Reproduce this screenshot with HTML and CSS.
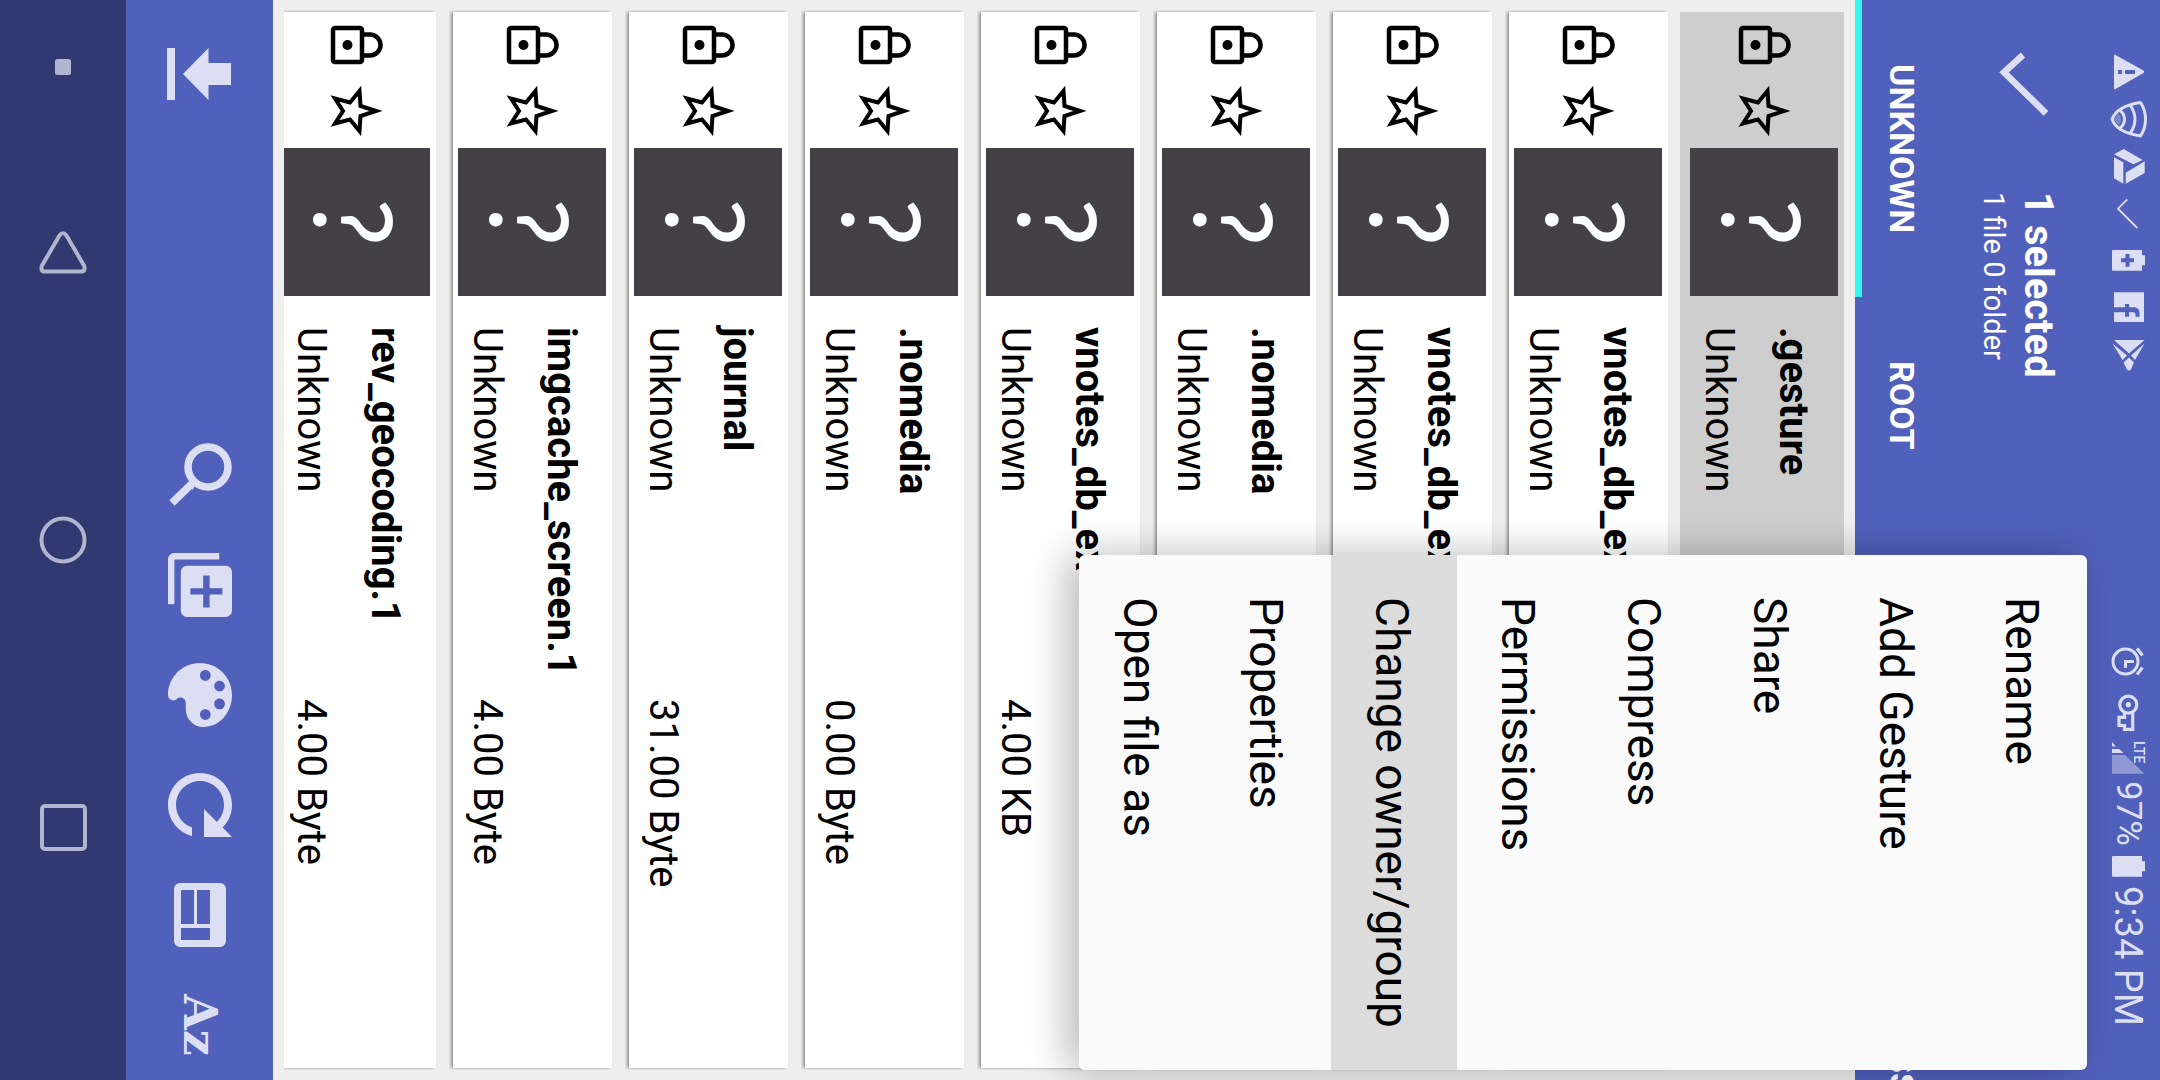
FILE: index.html
```html
<!DOCTYPE html>
<html lang="en">
<head>
<meta charset="utf-8">
<title>File manager</title>
<link rel="stylesheet" href="styles.css">
</head>
<body>
<svg class="defs" aria-hidden="true">
  <symbol id="lock" viewBox="0 0 66 66">
    <rect x="10" y="16" width="29" height="34" rx="2" fill="none" stroke="#000" stroke-width="4.500"/>
    <path d="M41 22.500h6a10.500 10.500 0 0 1 0 21h-6" fill="none" stroke="#000" stroke-width="4.500"/>
    <circle cx="24.500" cy="33" r="5"/>
  </symbol>
  <symbol id="star" viewBox="0 0 66 66">
    <path d="M53 33L37.500 28 36.500 13 27 24.500 12 20.500 20 33 12 45.500 27 41.500 36.500 53 37.500 38Z" fill="none" stroke="#000" stroke-width="4"/>
  </symbol>
</svg>

<header class="header">
  <div class="status">
    <div class="status-group">
      <svg class="status-icon" viewBox="0 0 48 47"><path fill-rule="evenodd" d="M10 7.500Q10 6 11.500 7L39.500 22.500Q41 23.700 39.500 25L11.500 41Q10 42 10 40.500ZM14 22v4h4v-4zM21 22v4h10v-4z"/></svg>
      <svg class="status-icon" viewBox="0 0 48 47"><g fill="none" stroke="currentColor" stroke-width="3"><path d="M8 24.300Q13 11 36.500 7.500Q41.500 15 41.500 24.300T36.500 41Q13 37.600 8 24.300Z" stroke-linejoin="round"/><path d="M26 10Q31 17 31 24.300T26 38.500M16 15.500Q20.500 19 20.500 24.300T16 33" /></g><path d="M9 24.300l6-6q4 6 0 12z" opacity=".3"/></svg>
      <svg class="status-icon" viewBox="0 0 48 47"><path d="M19.700 7L38.700 18 29.300 22.300 10 12.300ZM10 15.300L19.300 20.300V41.700L10 36.300ZM40.700 19.300V31L21.700 41.700V30.700Z"/></svg>
      <svg class="status-icon" viewBox="0 0 48 47"><path d="M23.300 10.300L14 19.700 33.300 39" fill="none" stroke="currentColor" stroke-width="1.800"/></svg>
      <svg class="status-icon" viewBox="0 0 48 47"><path fill-rule="evenodd" d="M9 14H38V19.300H41V29.300H38V34.700H9Q8 34.700 8 33.500V15Q8 14 9 14ZM21.500 18v4.300H17v4h4.500v4.400h4v-4.400H30v-4h-4.500V18z"/></svg>
      <svg class="status-icon" viewBox="0 0 48 47"><path d="M10 9.300H40V39H10Z"/><path class="cut" d="M10 24.300H21V21H25V24.300H29Q35.500 24.300 35.500 30V33.700H31.500V31Q31.500 29.300 29 29.300H25V33.700H21V29.300H10Z"/></svg>
      <svg class="status-icon" viewBox="0 0 48 47"><path d="M10 10H40.500L25 23.500ZM8.500 13.500L23 25.500 18.500 30ZM40.500 13.500L27 25.500 31 30ZM25 27.500L30 32.500 27 39.500Q25 41.500 23 39.500L19.500 32.500Z"/></svg>
    </div>
    <div class="status-group">
      <svg class="status-icon" viewBox="0 0 48 47"><g fill="none" stroke="currentColor" stroke-width="3"><circle cx="21.500" cy="21.500" r="12.500"/><path d="M21.500 28V21.500H30M33 8.500L38.500 15.500M38.500 27.500L33 34.500"/></g></svg>
      <svg class="status-icon" viewBox="0 0 48 47"><g fill="none" stroke="currentColor" stroke-width="3.200"><path d="M20.500 25.500V30.300H15V38.500H20.500V42.300H28.700V25.500"/><circle cx="24.300" cy="17.700" r="8.500"/></g><circle cx="24.300" cy="17.700" r="2.600"/></svg>
      <svg class="status-icon" viewBox="0 0 48 47"><path d="M8 8L12 12.500H8ZM8 15H15L19.500 19H8Z"/><path d="M8 21H21L40.300 39.700H8Z" opacity=".45"/><text class="lte" transform="translate(30 7) rotate(90)">LTE</text></svg>
      <span class="percent">97%</span>
      <svg class="status-icon status-battery" viewBox="0 4 48 40"><path d="M9 14H38V19.300H41V29.300H38V34.700H9Q8 34.700 8 33.500V15Q8 14 9 14Z"/></svg>
      <time class="clock">9:34 PM</time>
    </div>
  </div>
  <div class="selection">
    <button class="done" aria-label="Done"><svg width="72" height="72" viewBox="0 0 72 72"><path d="M41 7L22 24.300 64 65.300" fill="none" stroke="currentColor" stroke-width="6.500"/></svg></button>
    <div>
      <h1 class="title">1 selected</h1>
      <p class="subtitle">1 file 0 folder</p>
    </div>
  </div>
  <nav class="tabs">
    <a class="tab tab-active" href="#">UNKNOWN</a>
    <a class="tab" href="#">ROOT</a>
    <a class="tab tab-last" href="#">SS</a>
  </nav>
</header>

<main class="files">
  <ul class="list">
    <li class="file file-selected">
      <button class="mark" aria-label="Lock"><svg><use href="#lock"/></svg></button><button class="mark" aria-label="Favourite"><svg><use href="#star"/></svg></button>
      <span class="thumb">?</span>
      <div class="info"><b class="name">.gesture</b><span class="kind">Unknown</span></div>
    </li>
    <li class="file">
      <button class="mark" aria-label="Lock"><svg><use href="#lock"/></svg></button><button class="mark" aria-label="Favourite"><svg><use href="#star"/></svg></button>
      <span class="thumb">?</span>
      <div class="info"><b class="name">vnotes_db_ex</b><span class="kind">Unknown</span></div>
    </li>
    <li class="file">
      <button class="mark" aria-label="Lock"><svg><use href="#lock"/></svg></button><button class="mark" aria-label="Favourite"><svg><use href="#star"/></svg></button>
      <span class="thumb">?</span>
      <div class="info"><b class="name">vnotes_db_ex</b><span class="kind">Unknown</span></div>
    </li>
    <li class="file">
      <button class="mark" aria-label="Lock"><svg><use href="#lock"/></svg></button><button class="mark" aria-label="Favourite"><svg><use href="#star"/></svg></button>
      <span class="thumb">?</span>
      <div class="info"><b class="name">.nomedia</b><span class="kind">Unknown</span></div>
    </li>
    <li class="file">
      <button class="mark" aria-label="Lock"><svg><use href="#lock"/></svg></button><button class="mark" aria-label="Favourite"><svg><use href="#star"/></svg></button>
      <span class="thumb">?</span>
      <div class="info"><b class="name">vnotes_db_ex</b><span class="kind">Unknown</span><span class="size">4.00 KB</span></div>
    </li>
    <li class="file">
      <button class="mark" aria-label="Lock"><svg><use href="#lock"/></svg></button><button class="mark" aria-label="Favourite"><svg><use href="#star"/></svg></button>
      <span class="thumb">?</span>
      <div class="info"><b class="name">.nomedia</b><span class="kind">Unknown</span><span class="size">0.00 Byte</span></div>
    </li>
    <li class="file">
      <button class="mark" aria-label="Lock"><svg><use href="#lock"/></svg></button><button class="mark" aria-label="Favourite"><svg><use href="#star"/></svg></button>
      <span class="thumb">?</span>
      <div class="info"><b class="name">journal</b><span class="kind">Unknown</span><span class="size">31.00 Byte</span></div>
    </li>
    <li class="file">
      <button class="mark" aria-label="Lock"><svg><use href="#lock"/></svg></button><button class="mark" aria-label="Favourite"><svg><use href="#star"/></svg></button>
      <span class="thumb">?</span>
      <div class="info"><b class="name">imgcache_screen.1</b><span class="kind">Unknown</span><span class="size">4.00 Byte</span></div>
    </li>
    <li class="file">
      <button class="mark" aria-label="Lock"><svg><use href="#lock"/></svg></button><button class="mark" aria-label="Favourite"><svg><use href="#star"/></svg></button>
      <span class="thumb">?</span>
      <div class="info"><b class="name">rev_geocoding.1</b><span class="kind">Unknown</span><span class="size">4.00 Byte</span></div>
    </li>
  </ul>
</main>

<div class="toolbar">
  <button class="tool tool-first" aria-label="Download"><svg viewBox="0 0 96 96"><path d="M15 22h8v52h-8zM31 48L56.500 22V37H79V59H56.500V74Z"/></svg></button>
  <button class="tool" aria-label="Search"><svg viewBox="0 0 96 96"><g fill="none" stroke="currentColor"><circle cx="56" cy="40" r="20" stroke-width="7.500"/><path d="M20 76L39 57.500" stroke-width="7.500"/></g><path d="M35 56q4-4 6-2l3 1-3 8z"/></svg></button>
  <button class="tool" aria-label="Add"><svg viewBox="0 0 30 30"><path transform="translate(15 15) rotate(90) translate(-12 -12)" d="M4 6H2v14c0 1.100.9 2 2 2h14v-2H4V6zm16-4H8c-1.100 0-2 .9-2 2v12c0 1.100.9 2 2 2h12c1.100 0 2-.9 2-2V4c0-1.100-.9-2-2-2zm-1 9h-4v4h-2v-4H9V9h4V5h2v4h4v2z"/></svg></button>
  <button class="tool" aria-label="Theme"><svg viewBox="0 0 27 27"><path transform="translate(13.500 13.500) rotate(90) translate(-12 -12)" d="M12 3c-4.970 0-9 4.030-9 9s4.030 9 9 9c.83 0 1.500-.67 1.500-1.500 0-.39-.15-.74-.39-1.010-.23-.26-.38-.61-.38-.99 0-.83.67-1.500 1.500-1.500H16c2.760 0 5-2.240 5-5 0-4.420-4.030-8-9-8zm-5.500 9c-.83 0-1.500-.67-1.500-1.500S5.670 9 6.500 9 8 9.670 8 10.500 7.330 12 6.500 12zm3-4C8.670 8 8 7.330 8 6.500S8.670 5 9.500 5s1.500.67 1.500 1.500S10.330 8 9.500 8zm5 0c-.83 0-1.500-.67-1.500-1.500S13.670 5 14.500 5s1.500.67 1.500 1.500S15.330 8 14.500 8zm3 4c-.83 0-1.500-.67-1.500-1.500S16.670 9 17.500 9s1.500.67 1.500 1.500-.67 1.500-1.500 1.500z"/></svg></button>
  <button class="tool" aria-label="Refresh"><svg viewBox="0 0 24 24"><path transform="rotate(90 12 12)" d="M17.650 6.350C16.200 4.900 14.210 4 12 4c-4.420 0-7.990 3.580-7.990 8s3.570 8 7.990 8c3.730 0 6.840-2.550 7.730-6h-2.080c-.82 2.330-3.040 4-5.650 4-3.310 0-6-2.690-6-6s2.690-6 6-6c1.660 0 3.140.69 4.220 1.780L13 11h7V4l-2.350 2.350z"/></svg></button>
  <button class="tool" aria-label="View"><svg viewBox="0 0 96 96"><path fill-rule="evenodd" d="M28 16H68a6 6 0 0 1 6 6V74a6 6 0 0 1-6 6H28a6 6 0 0 1-6-6V22a6 6 0 0 1 6-6ZM29 23v34h13V23zM45 23v34h13V23zM29 61v12h29V61z"/></svg></button>
  <button class="tool sort">Az</button>
</div>

<nav class="system">
  <button class="sys sys-first" aria-label="Hide bar"><svg width="48" height="48" viewBox="0 0 48 48"><rect x="16" y="16" width="16" height="16" rx="2.500" fill="currentColor"/></svg></button>
  <button class="sys" aria-label="Back"><svg width="48" height="48" viewBox="0 0 48 48"><path d="M20.500 6.500L3 36.500Q1 42.500 6 42.500H42Q47 42.500 45 36.500L27.500 6.500Q24 2 20.500 6.500Z"/></svg></button>
  <button class="sys" aria-label="Home"><svg width="48" height="48" viewBox="0 0 48 48"><circle cx="24" cy="24" r="21.500"/></svg></button>
  <button class="sys" aria-label="Recent apps"><svg width="48" height="48" viewBox="0 0 48 48"><rect x="3" y="3" width="43" height="43" rx="3"/></svg></button>
</nav>

<div class="menu" role="menu">
  <button class="menu-item" role="menuitem">Rename</button>
  <button class="menu-item" role="menuitem">Add Gesture</button>
  <button class="menu-item" role="menuitem">Share</button>
  <button class="menu-item" role="menuitem">Compress</button>
  <button class="menu-item" role="menuitem">Permissions</button>
  <button class="menu-item menu-item-pressed" role="menuitem">Change owner/group</button>
  <button class="menu-item" role="menuitem">Properties</button>
  <button class="menu-item" role="menuitem">Open file as</button>
</div>
</body>
</html>
```

FILE: styles.css
```css
:root {
  --brand: #5160bb;
  --brand-dark: #313970;
  --on-brand: #dcdff3;
  --page: #efefef;
}

* { box-sizing: border-box; }

html { writing-mode: vertical-rl; text-orientation: sideways; }

body {
  position: relative;
  margin: 0;
  block-size: 100vw;
  inline-size: 100vh;
  display: flex;
  flex-direction: column;
  overflow: hidden;
  background: var(--page);
  font-family: Roboto, "Liberation Sans", sans-serif;
  color: #000;
}

button {
  writing-mode: inherit;
  margin: 0;
  padding: 0;
  border: 0;
  background: none;
  font: inherit;
  color: inherit;
}

svg { display: block; fill: currentColor; }
.defs { position: absolute; width: 0; height: 0; }

/* Header */
.header { flex: none; background: var(--brand); color: var(--on-brand); }

.status {
  block-size: 72px;
  padding-block: 8px 16px;
  padding-inline: 48px 54px;
  display: flex;
  justify-content: space-between;
}
.status-group { display: flex; align-items: center; white-space: nowrap; }
.status-icon { width: 48px; height: 47px; flex: none; }
.status-battery { height: 40px; }
.cut { fill: var(--brand); }
.lte { font-size: 14px; font-weight: 500; writing-mode: horizontal-tb; }
.percent { font-size: 35px; }
.clock { font-size: 38px; }

.selection {
  block-size: 141px;
  padding-inline-start: 48px;
  display: flex;
  align-items: center;
  gap: 72px;
}
.title, .subtitle { margin: 0; color: #fff; }
.title { font-size: 40px; line-height: 48px; font-weight: 700; }
.subtitle { font-size: 29px; line-height: 40px; }

.tabs { display: flex; block-size: 92px; overflow: hidden; }
.tab {
  flex: none;
  padding-block-start: 6px;
  padding-inline: 64px;
  border-block-end: 7px solid transparent;
  line-height: 79px;
  font-size: 34px;
  font-weight: 700;
  color: #fff;
  text-decoration: none;
}
.tab-active { border-color: #33f7f3; }
.tab-last { margin-inline-start: auto; padding-inline: 0; inline-size: 28px; }

/* File list */
.files {
  flex: 1;
  min-block-size: 0;
  overflow: hidden;
  padding-block-start: 11px;
  padding-inline: 12px;
  border-block-end: 11px solid var(--page);
}
.list {
  margin: 0;
  padding: 0;
  list-style: none;
  display: flex;
  flex-direction: column;
  gap: 17px;
}
.file {
  flex: none;
  block-size: 159px;
  padding-block-start: 1px;
  display: flex;
  align-items: center;
  background: #fff;
  box-shadow: -2px 0 3px rgba(0, 0, 0, .4);
}
.file-selected { background: #cecece; box-shadow: -5px 0 0 #cecece; }
.mark { inline-size: 66px; block-size: 66px; flex: none; }
.mark svg { width: 66px; height: 66px; }
.thumb {
  flex: none;
  inline-size: 148px;
  block-size: 148px;
  margin-inline: 4px 31px;
  background: #444146;
  color: #fbffff;
  font-family: Lato, "Open Sans", sans-serif;
  font-size: 108px;
  line-height: 148px;
  text-align: center;
}
.info {
  padding-block-start: 17px;
  display: grid;
  grid-template-columns: 372px auto;
  row-gap: 14px;
  font-size: 40px;
  line-height: 60px;
  white-space: nowrap;
}
.name { grid-column: 1 / -1; }

/* Bottom toolbar */
.toolbar {
  flex: none;
  block-size: 147px;
  display: flex;
  background: var(--brand);
  color: var(--on-brand);
}
.tool { inline-size: 110px; display: flex; align-items: center; justify-content: center; }
.tool svg { width: 96px; height: 96px; }
.tool-first { inline-size: 148px; margin-inline-end: auto; }
.sort { font-family: "DejaVu Serif", serif; font-size: 46px; font-weight: 700; }

/* System navigation */
.system {
  flex: none;
  block-size: 126px;
  display: grid;
  grid-template-columns: 110px 1fr 1fr 1fr 110px;
  background: var(--brand-dark);
  color: #b1b5d0;
}
.sys { display: flex; align-items: center; justify-content: center; }
.sys svg { fill: none; stroke: currentColor; stroke-width: 4; }
.sys-first { padding-inline-start: 24px; }
.sys-first svg { stroke: none; }

/* Overflow menu */
.menu {
  position: absolute;
  inset-block-start: 73px;
  inset-inline-end: 10px;
  inline-size: 515px;
  display: flex;
  flex-direction: column;
  overflow: hidden;
  border-radius: 6px;
  background: #fafafa;
  box-shadow: -12px 0 40px rgba(0, 0, 0, .28);
}
.menu-item {
  block-size: 126px;
  padding-block-start: 5px;
  padding-inline: 42px;
  font-size: 46px;
  text-align: start;
  white-space: nowrap;
}
.menu-item-pressed { background: #dcdcdc; }
```
